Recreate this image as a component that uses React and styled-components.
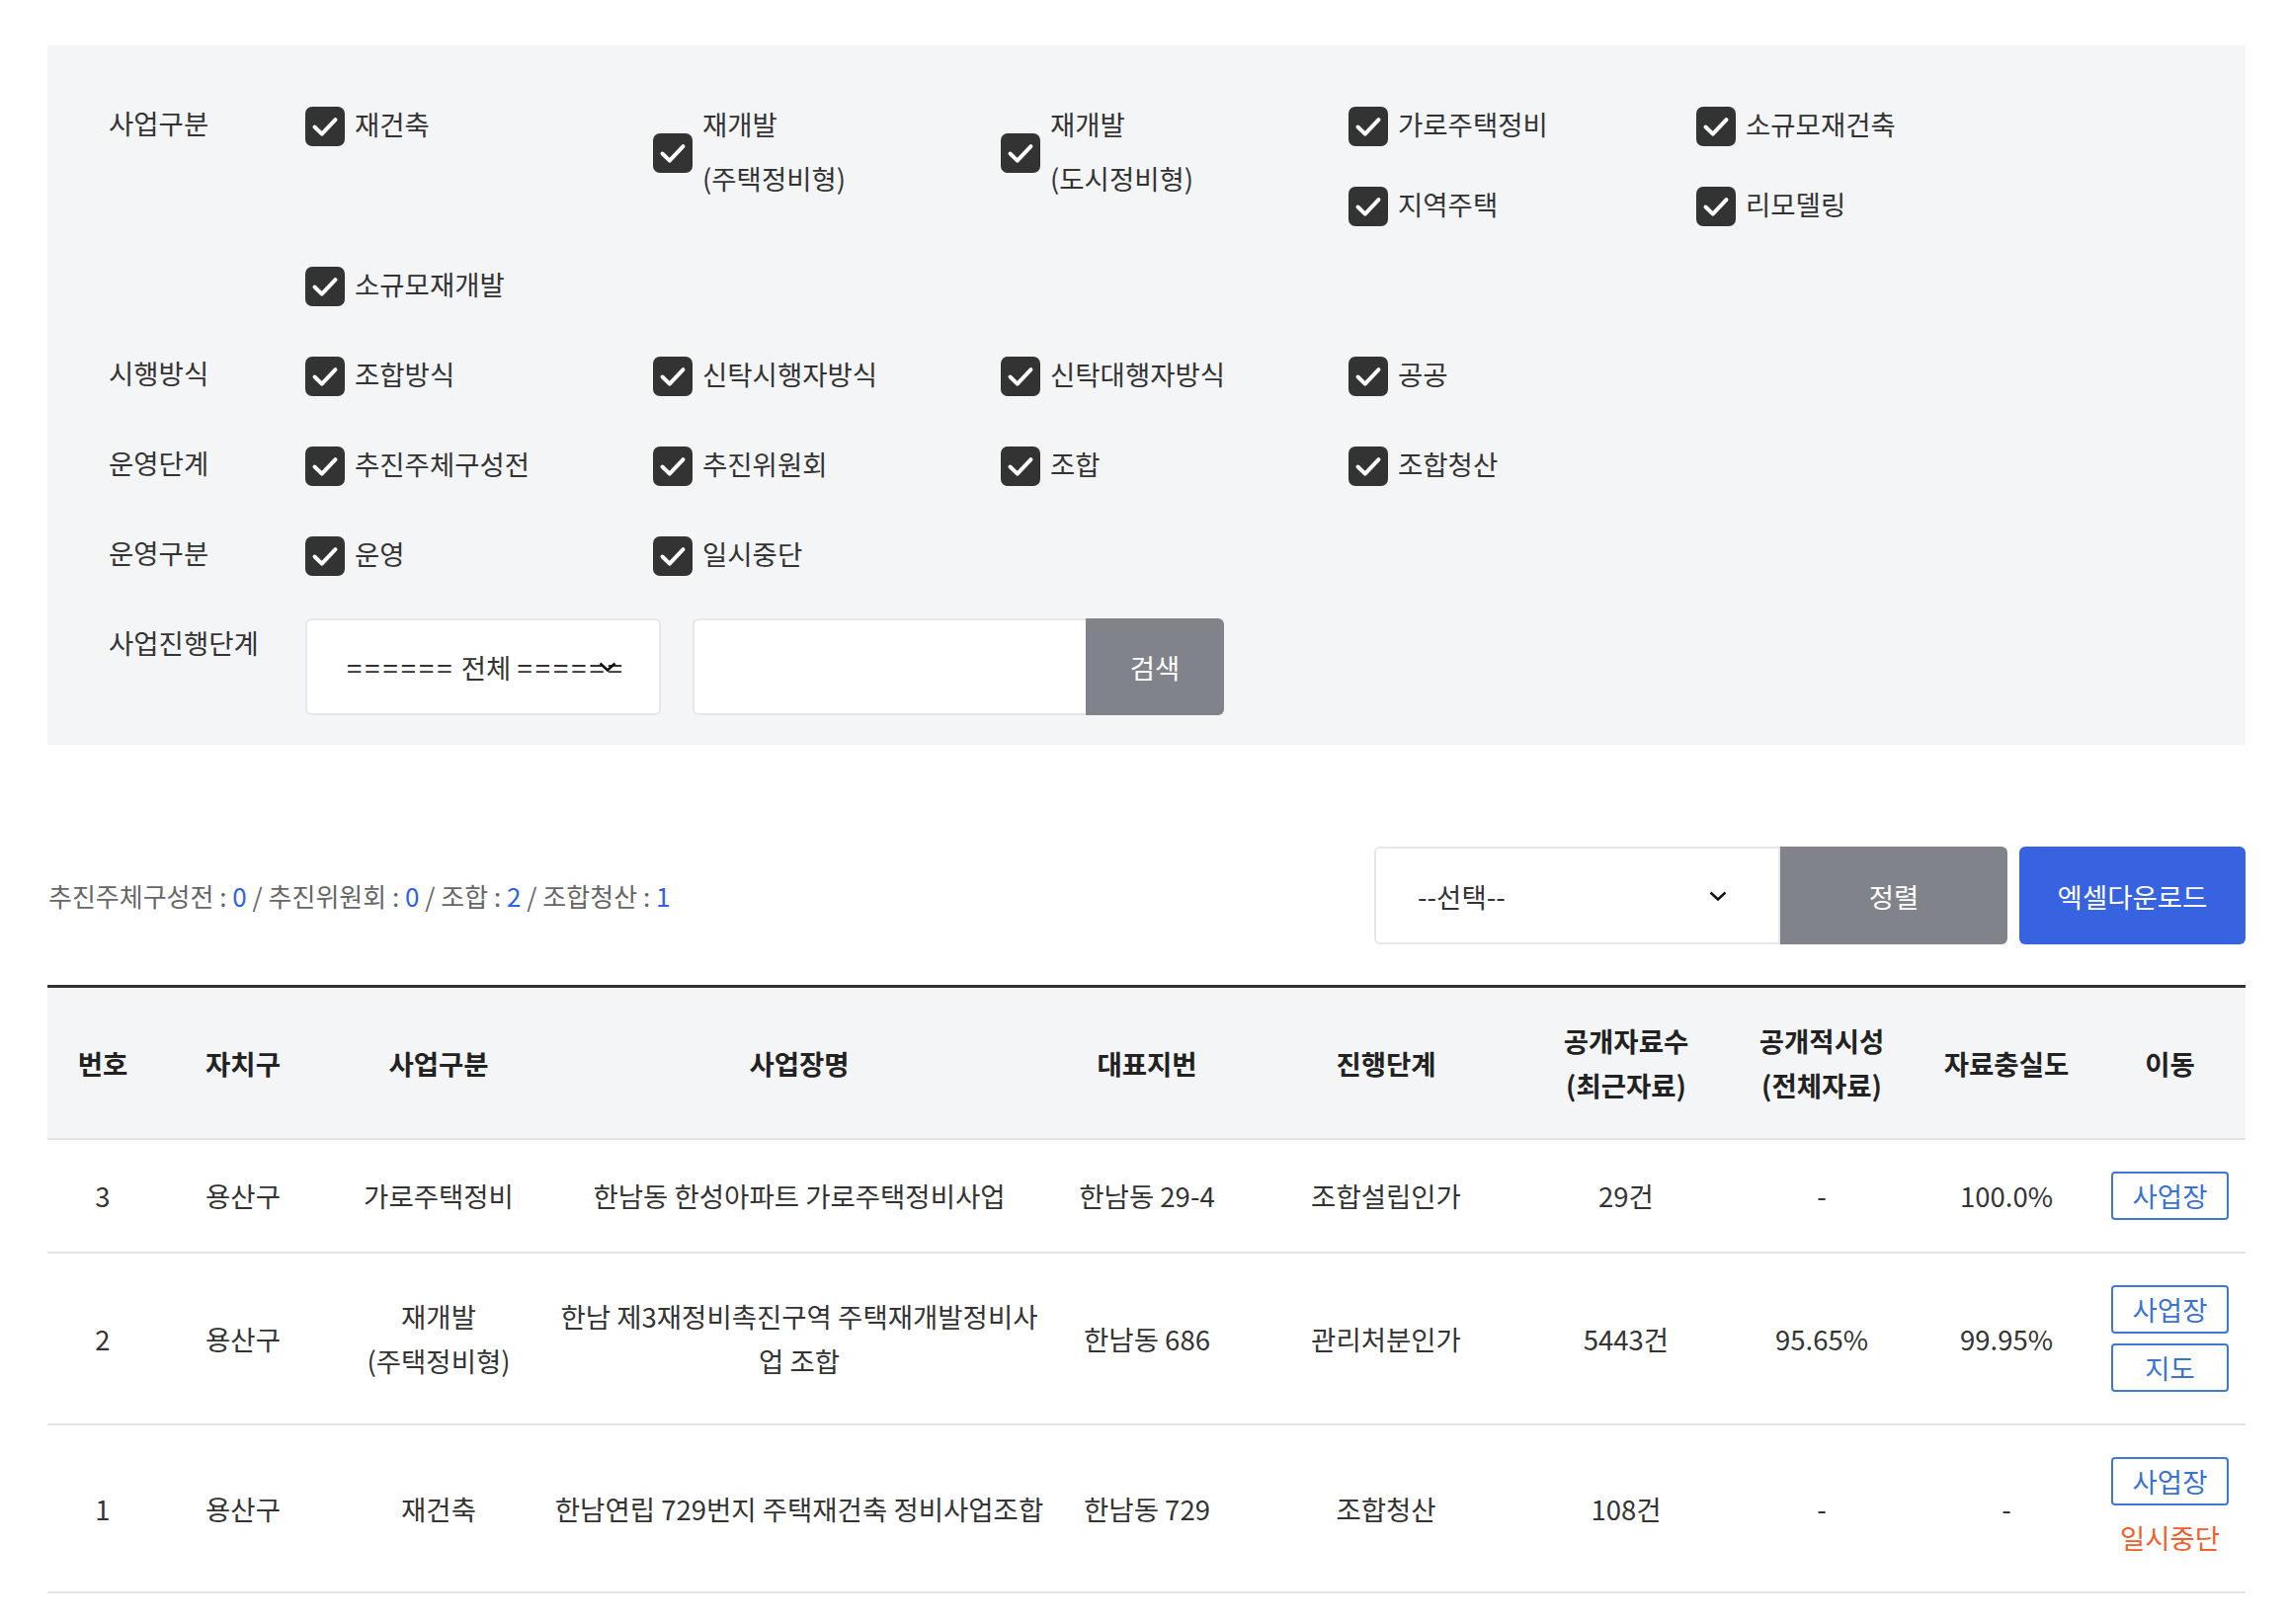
import styled, { createGlobalStyle } from "styled-components";

const GlobalStyle = createGlobalStyle`
  body {
    margin: 0;
    background: #ffffff;
    font-family: "Noto Sans CJK KR", "Noto Sans", sans-serif;
    color: #333333;
  }
  * {
    box-sizing: border-box;
  }
`;

const Page = styled.div`
  width: 2225px;
  margin: 46px 0 0 48px;
  padding-bottom: 33px;
`;

const FilterPanel = styled.div`
  background: #f4f5f7;
  padding: 54px 0 30px 62px;
  display: flex;
  flex-direction: column;
  gap: 36px;
`;

const FilterRow = styled.div`
  display: flex;
  align-items: flex-start;
`;

const RowLabel = styled.div`
  width: 199px;
  flex-shrink: 0;
  font-size: 27.5px;
  line-height: 48px;
  color: #333;
`;

const CheckGrid = styled.div`
  display: grid;
  grid-template-columns: repeat(5, 352px);
  row-gap: 26px;
`;

const CheckItem = styled.label`
  display: flex;
  align-items: center;
  gap: 10px;
  align-self: start;
  font-size: 27.5px;
  line-height: 55px;
  color: #333;
  grid-column: ${(p) => p.$col || "auto"};
  grid-row: ${(p) => p.$row || "auto"};

  span {
    position: relative;
    top: -2px;
  }
`;

const Box = styled.i`
  width: 40px;
  height: 40px;
  flex-shrink: 0;
  border-radius: 7px;
  background: #333333;
  display: block;
`;

const Check = ({ children, col, row }) => (
  <CheckItem $col={col} $row={row}>
    <Box>
      <svg width="40" height="40" viewBox="0 0 40 40">
        <path
          d="M9.5 20.5 L16.8 27.6 L30.5 13.2"
          fill="none"
          stroke="#ffffff"
          strokeWidth="4"
          strokeLinecap="round"
          strokeLinejoin="round"
        />
      </svg>
    </Box>
    <span>{children}</span>
  </CheckItem>
);

const SearchGroup = styled.div`
  display: flex;
  gap: 32px;
`;

const SelectBox = styled.div`
  position: relative;
  width: ${(p) => p.$width}px;
  height: ${(p) => p.$height}px;
  background: #ffffff;
  border: 2px solid #e6e7eb;
  border-radius: ${(p) => p.$radius};
  display: flex;
  align-items: center;
  padding-left: ${(p) => p.$pad}px;
  font-size: 27.5px;
  color: #333;
  overflow: hidden;
  white-space: nowrap;
`;

const Dashes = styled.span`
  letter-spacing: 3px;
`;

const Chevron = styled.svg`
  position: absolute;
  right: ${(p) => p.$right}px;
  top: 50%;
  margin-top: -6px;
`;

const SearchBox = styled.div`
  display: flex;
`;

const SearchInput = styled.div`
  width: 398px;
  height: 98px;
  background: #ffffff;
  border: 2px solid #e6e7eb;
  border-right: none;
  border-radius: 6px 0 0 6px;
`;

const GrayButton = styled.button`
  width: ${(p) => p.$width}px;
  height: ${(p) => p.$height}px;
  border: none;
  background: #808389;
  color: #ffffff;
  font-family: inherit;
  font-size: 27.5px;
  border-radius: 0 6px 6px 0;
  padding: 0;
`;

const Toolbar = styled.div`
  margin-top: 103px;
  display: flex;
  justify-content: space-between;
  align-items: center;
`;

const Summary = styled.div`
  font-size: 26px;
  color: #666666;
  padding-left: 1px;
`;

const Count = styled.span`
  color: #2f62e0;
`;

const Actions = styled.div`
  display: flex;
  align-items: center;
`;

const BlueButton = styled.button`
  margin-left: 12px;
  width: 229px;
  height: 99px;
  border: none;
  border-radius: 6px;
  background: #3763e0;
  color: #ffffff;
  font-family: inherit;
  font-size: 27.5px;
  padding: 0;
`;

const Table = styled.table`
  margin-top: 41px;
  width: 100%;
  border-collapse: collapse;
  table-layout: fixed;
  border-top: 3px solid #333333;
  font-size: 27.5px;
`;

const Th = styled.th`
  background: #f4f5f7;
  padding: 31px 4px;
  line-height: 45px;
  font-weight: 700;
  color: #222;
  border-bottom: 2px solid #e3e4e8;
  vertical-align: middle;
`;

const Td = styled.td`
  padding: 32px 4px;
  line-height: 45px;
  text-align: center;
  color: #333;
  border-bottom: 2px solid #e3e4e8;
  vertical-align: middle;
`;

const MoveCell = styled.div`
  display: flex;
  flex-direction: column;
  align-items: center;
  gap: 10px;
`;

const LinkButton = styled.a`
  display: flex;
  align-items: center;
  justify-content: center;
  width: 119px;
  height: 49px;
  border: 2px solid #3f78d4;
  border-radius: 4px;
  background: #ffffff;
  color: #3a72d0;
  line-height: 1;
`;

const Paused = styled.span`
  color: #f0602e;
  line-height: 45px;
`;

const colWidths = [112, 172, 224, 506, 198, 286, 200, 196, 178, 153];

const rows = [
  {
    no: 3,
    gu: "용산구",
    type: ["가로주택정비"],
    name: "한남동 한성아파트 가로주택정비사업",
    lot: "한남동 29-4",
    stage: "조합설립인가",
    count: "29건",
    timely: "-",
    full: "100.0%",
    map: false,
    paused: false,
  },
  {
    no: 2,
    gu: "용산구",
    type: ["재개발", "(주택정비형)"],
    name: "한남 제3재정비촉진구역 주택재개발정비사업 조합",
    lot: "한남동 686",
    stage: "관리처분인가",
    count: "5443건",
    timely: "95.65%",
    full: "99.95%",
    map: true,
    paused: false,
  },
  {
    no: 1,
    gu: "용산구",
    type: ["재건축"],
    name: "한남연립 729번지 주택재건축 정비사업조합",
    lot: "한남동 729",
    stage: "조합청산",
    count: "108건",
    timely: "-",
    full: "-",
    map: false,
    paused: true,
  },
];

const ChevronIcon = ({ right }) => (
  <Chevron $right={right} width="18" height="12" viewBox="0 0 18 12">
    <path d="M1.5 2.5 L9 9.5 L16.5 2.5" fill="none" stroke="#111" strokeWidth="2.4" />
  </Chevron>
);

export default function App() {
  return (
    <>
      <GlobalStyle />
      <Page>
        <FilterPanel>
          <FilterRow>
            <RowLabel>사업구분</RowLabel>
            <CheckGrid>
              <Check col="1" row="1">재건축</Check>
              <Check col="2" row="1 / span 2">
                재개발
                <br />
                (주택정비형)
              </Check>
              <Check col="3" row="1 / span 2">
                재개발
                <br />
                (도시정비형)
              </Check>
              <Check col="4" row="1">가로주택정비</Check>
              <Check col="5" row="1">소규모재건축</Check>
              <Check col="4" row="2">지역주택</Check>
              <Check col="5" row="2">리모델링</Check>
              <Check col="1" row="3">소규모재개발</Check>
            </CheckGrid>
          </FilterRow>
          <FilterRow>
            <RowLabel>시행방식</RowLabel>
            <CheckGrid>
              <Check>조합방식</Check>
              <Check>신탁시행자방식</Check>
              <Check>신탁대행자방식</Check>
              <Check>공공</Check>
            </CheckGrid>
          </FilterRow>
          <FilterRow>
            <RowLabel>운영단계</RowLabel>
            <CheckGrid>
              <Check>추진주체구성전</Check>
              <Check>추진위원회</Check>
              <Check>조합</Check>
              <Check>조합청산</Check>
            </CheckGrid>
          </FilterRow>
          <FilterRow>
            <RowLabel>운영구분</RowLabel>
            <CheckGrid>
              <Check>운영</Check>
              <Check>일시중단</Check>
            </CheckGrid>
          </FilterRow>
          <FilterRow>
            <RowLabel>사업진행단계</RowLabel>
            <SearchGroup>
              <SelectBox $width={360} $height={98} $radius="6px" $pad={40}>
                <Dashes>======</Dashes>&nbsp;전체&nbsp;<Dashes>======</Dashes>
                <ChevronIcon right={43} />
              </SelectBox>
              <SearchBox>
                <SearchInput />
                <GrayButton $width={140} $height={98}>검색</GrayButton>
              </SearchBox>
            </SearchGroup>
          </FilterRow>
        </FilterPanel>

        <Toolbar>
          <Summary>
            추진주체구성전 : <Count>0</Count> / 추진위원회 : <Count>0</Count> / 조합 :{" "}
            <Count>2</Count> / 조합청산 : <Count>1</Count>
          </Summary>
          <Actions>
            <SelectBox $width={411} $height={99} $radius="6px 0 0 6px" $pad={42}>
              --선택--
              <ChevronIcon right={52} />
            </SelectBox>
            <GrayButton $width={230} $height={99}>정렬</GrayButton>
            <BlueButton>엑셀다운로드</BlueButton>
          </Actions>
        </Toolbar>

        <Table>
          <colgroup>
            {colWidths.map((w, i) => (
              <col key={i} style={{ width: w }} />
            ))}
          </colgroup>
          <thead>
            <tr>
              <Th>번호</Th>
              <Th>자치구</Th>
              <Th>사업구분</Th>
              <Th>사업장명</Th>
              <Th>대표지번</Th>
              <Th>진행단계</Th>
              <Th>
                공개자료수
                <br />
                (최근자료)
              </Th>
              <Th>
                공개적시성
                <br />
                (전체자료)
              </Th>
              <Th>자료충실도</Th>
              <Th>이동</Th>
            </tr>
          </thead>
          <tbody>
            {rows.map((r) => (
              <tr key={r.no}>
                <Td>{r.no}</Td>
                <Td>{r.gu}</Td>
                <Td>
                  {r.type.map((t, i) => (
                    <div key={i}>{t}</div>
                  ))}
                </Td>
                <Td>{r.name}</Td>
                <Td>{r.lot}</Td>
                <Td>{r.stage}</Td>
                <Td>{r.count}</Td>
                <Td>{r.timely}</Td>
                <Td>{r.full}</Td>
                <Td>
                  <MoveCell>
                    <LinkButton>사업장</LinkButton>
                    {r.map && <LinkButton>지도</LinkButton>}
                    {r.paused && <Paused>일시중단</Paused>}
                  </MoveCell>
                </Td>
              </tr>
            ))}
          </tbody>
        </Table>
      </Page>
    </>
  );
}
